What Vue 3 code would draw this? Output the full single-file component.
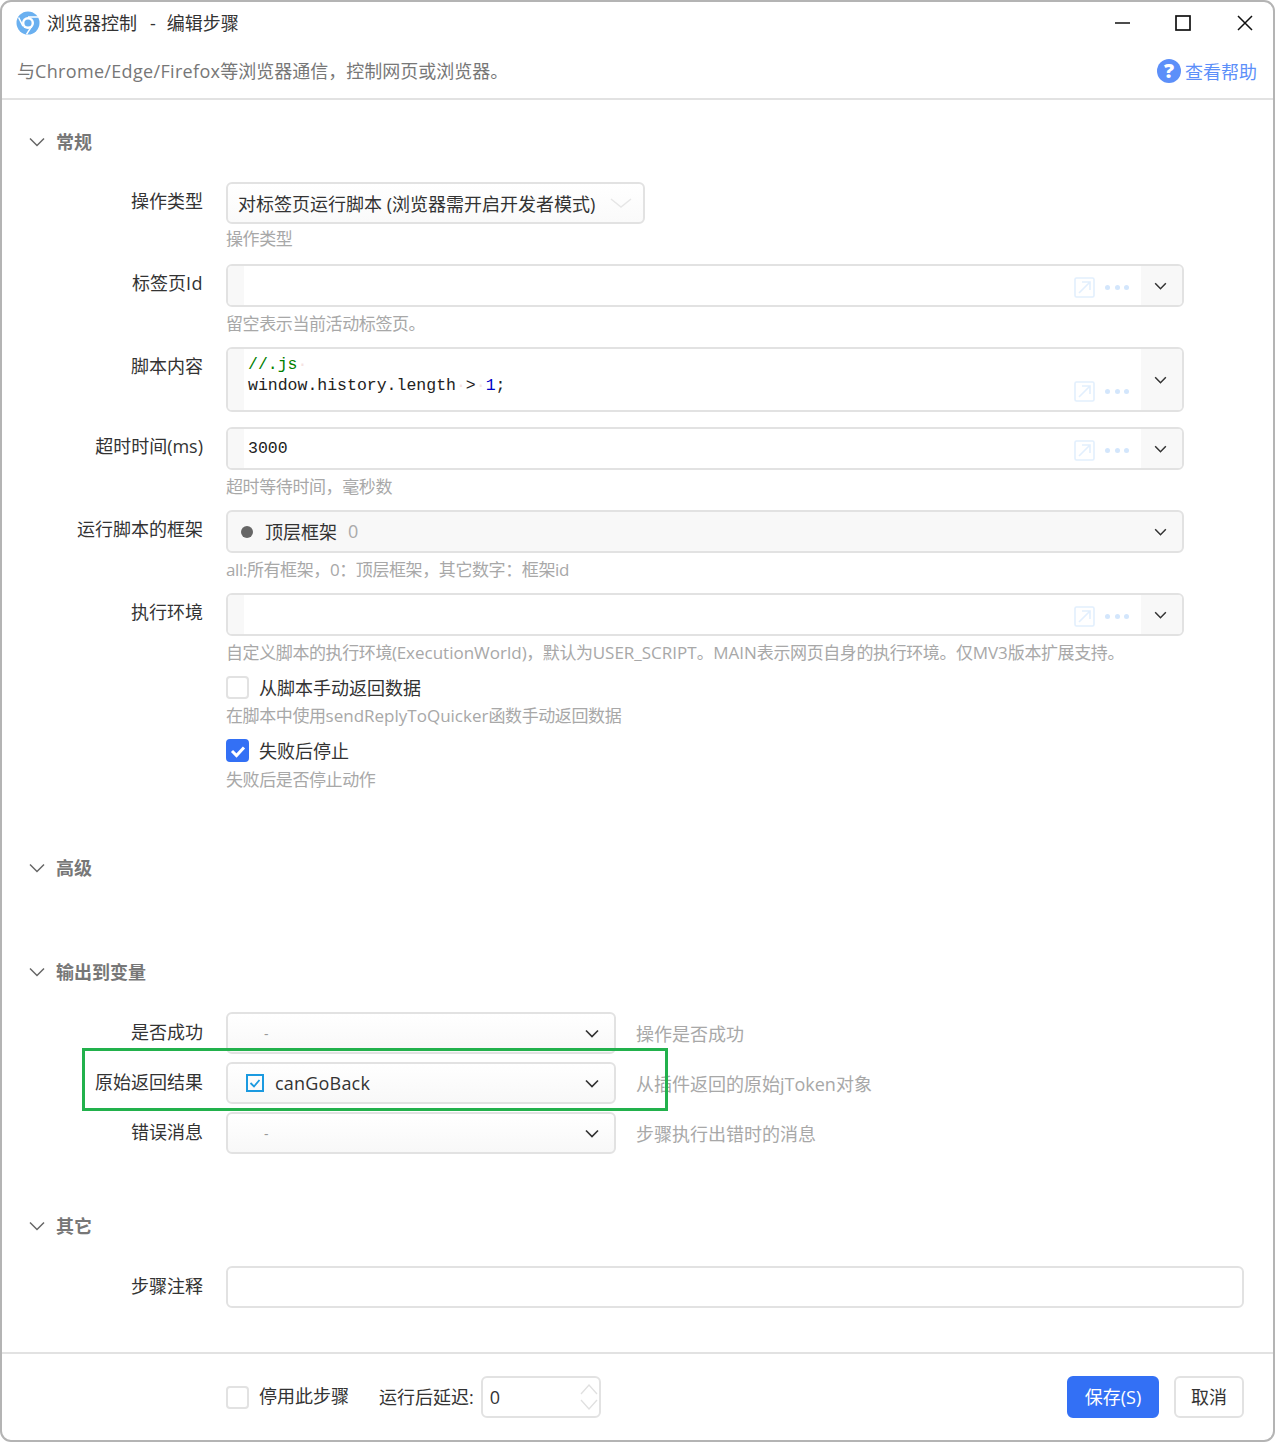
<script setup>
const chevron = 'M1 1.5 L7 7.5 L13 1.5'
const outputs = [
  { label: '是否成功', value: '', hint: '操作是否成功' },
  { label: '原始返回结果', value: 'canGoBack', hint: '从插件返回的原始jToken对象', marked: true },
  { label: '错误消息', value: '', hint: '步骤执行出错时的消息' }
]
</script>

<template>
  <div class="window">
    <header class="titlebar">
      <svg class="logo" viewBox="0 0 24 24" width="24" height="24">
        <circle cx="12" cy="12" r="11.5" fill="#6AB0F0" />
        <circle cx="12" cy="12" r="6" fill="#fff" />
        <circle cx="12" cy="12" r="3.6" fill="#6AB0F0" />
        <path d="M12 6 H22.4 M7 15.2 L2.6 6.5 M15.8 15 L10.5 23.4" stroke="#fff" stroke-width="1.5" fill="none" />
      </svg>
      <span class="title">浏览器控制</span>
      <span class="title-sep">-</span>
      <span class="title">编辑步骤</span>
      <div class="win-controls">
        <svg viewBox="0 0 16 16" width="16" height="16"><path d="M1 8 H16" stroke="#111" stroke-width="1.6" /></svg>
        <svg viewBox="0 0 16 16" width="16" height="16"><rect x="1" y="1" width="14" height="14" fill="none" stroke="#111" stroke-width="1.7" /></svg>
        <svg viewBox="0 0 16 16" width="16" height="16"><path d="M1 1 L15 15 M15 1 L1 15" stroke="#111" stroke-width="1.5" /></svg>
      </div>
    </header>

    <div class="descbar">
      <span class="desc">与<span class="lat-desc">Chrome/Edge/Firefox</span>等浏览器通信，控制网页或浏览器。</span>
      <a class="help"><span class="help-icon">?</span>查看帮助</a>
    </div>

    <main class="content">
      <section class="head first">
        <svg class="head-chev" viewBox="0 0 16 10" width="16" height="10"><path d="M1 1.5 L8 8.5 L15 1.5" /></svg>
        <span>常规</span>
      </section>

      <div class="row">
        <label class="label">操作类型</label>
        <div>
          <div class="field short select-plain">
            <span class="val">对标签页运行脚本 (浏览器需开启开发者模式)</span>
            <svg class="chev faint" viewBox="0 0 22 10" width="22" height="10"><path d="M1 1 L11 9 L21 1" /></svg>
          </div>
          <p class="hint hint-first">操作类型</p>
        </div>
      </div>

      <div class="row">
        <label class="label">标签页<span class="lat-id">Id</span></label>
        <div>
          <div class="field wide editor">
            <div class="gutter"></div>
            <div class="code"></div>
            <div class="tools">
              <svg viewBox="0 0 21 21" width="21" height="21" class="open"><rect x="1" y="1" width="19" height="19" rx="1.5" /><path d="M5 16 L16 5 M8 5 H16 V13" /></svg>
              <span class="dots"><i></i><i></i><i></i></span>
            </div>
            <div class="drop"><svg viewBox="0 0 14 9" width="13" height="8"><path :d="chevron" /></svg></div>
          </div>
          <p class="hint">留空表示当前活动标签页。</p>
        </div>
      </div>

      <div class="row row-tight">
        <label class="label">脚本内容</label>
        <div class="field wide editor tall">
          <div class="gutter"></div>
          <div class="code multi">
            <div><span class="cm">//.js</span><span class="ws">·</span></div>
            <div>window.history.length<span class="ws">·</span>&gt;<span class="ws">·</span><span class="num">1</span>;</div>
          </div>
          <div class="tools">
            <svg viewBox="0 0 21 21" width="21" height="21" class="open"><rect x="1" y="1" width="19" height="19" rx="1.5" /><path d="M5 16 L16 5 M8 5 H16 V13" /></svg>
            <span class="dots"><i></i><i></i><i></i></span>
          </div>
          <div class="drop"><svg viewBox="0 0 14 9" width="13" height="8"><path :d="chevron" /></svg></div>
        </div>
      </div>

      <div class="row">
        <label class="label">超时时间(ms)</label>
        <div>
          <div class="field wide editor">
            <div class="gutter"></div>
            <div class="code">3000</div>
            <div class="tools">
              <svg viewBox="0 0 21 21" width="21" height="21" class="open"><rect x="1" y="1" width="19" height="19" rx="1.5" /><path d="M5 16 L16 5 M8 5 H16 V13" /></svg>
              <span class="dots"><i></i><i></i><i></i></span>
            </div>
            <div class="drop"><svg viewBox="0 0 14 9" width="13" height="8"><path :d="chevron" /></svg></div>
          </div>
          <p class="hint">超时等待时间，毫秒数</p>
        </div>
      </div>

      <div class="row">
        <label class="label">运行脚本的框架</label>
        <div>
          <div class="field wide frame">
            <span class="dot"></span>
            <span class="val">顶层框架</span>
            <span class="val-sub">0</span>
            <svg class="frame-chev" viewBox="0 0 14 9" width="13" height="8"><path :d="chevron" /></svg>
          </div>
          <p class="hint">all:所有框架，0：顶层框架，其它数字：框架id</p>
        </div>
      </div>

      <div class="row">
        <label class="label">执行环境</label>
        <div>
          <div class="field wide editor">
            <div class="gutter"></div>
            <div class="code"></div>
            <div class="tools">
              <svg viewBox="0 0 21 21" width="21" height="21" class="open"><rect x="1" y="1" width="19" height="19" rx="1.5" /><path d="M5 16 L16 5 M8 5 H16 V13" /></svg>
              <span class="dots"><i></i><i></i><i></i></span>
            </div>
            <div class="drop"><svg viewBox="0 0 14 9" width="13" height="8"><path :d="chevron" /></svg></div>
          </div>
          <p class="hint nowrap">自定义脚本的执行环境(<span class="lat">ExecutionWorld</span>)，默认为<span class="lat">USER_SCRIPT</span>。<span class="lat">MAIN</span>表示网页自身的执行环境。仅<span class="lat">MV3</span>版本扩展支持。</p>
        </div>
      </div>

      <div class="row">
        <span></span>
        <div>
          <div class="check-line"><span class="box"></span><span class="check-text">从脚本手动返回数据</span></div>
          <p class="hint">在脚本中使用<span class="lat">sendReplyToQuicker</span>函数手动返回数据</p>
          <div class="check-line">
            <span class="box on"><svg viewBox="0 0 16 16" width="16" height="16"><path d="M2 8 L6.5 12.5 L14 4.5" /></svg></span>
            <span class="check-text">失败后停止</span>
          </div>
          <p class="hint hint-last">失败后是否停止动作</p>
        </div>
      </div>

      <section class="head adv">
        <svg class="head-chev" viewBox="0 0 16 10" width="16" height="10"><path d="M1 1.5 L8 8.5 L15 1.5" /></svg>
        <span>高级</span>
      </section>

      <section class="head out">
        <svg class="head-chev" viewBox="0 0 16 10" width="16" height="10"><path d="M1 1.5 L8 8.5 L15 1.5" /></svg>
        <span>输出到变量</span>
      </section>

      <div class="row out-row" v-for="o in outputs" :key="o.label">
        <label class="label low">{{ o.label }}</label>
        <div class="out-line">
          <div class="field out-select">
            <template v-if="o.value">
              <svg class="var-check" viewBox="0 0 18 18" width="18" height="18">
                <rect x="1" y="1" width="16" height="16" fill="none" stroke="#1B9AE0" stroke-width="2" />
                <path d="M4.5 9 L8 12.5 L13.5 6" fill="none" stroke="#1B9AE0" stroke-width="1.8" />
              </svg>
              <span class="val var-name">{{ o.value }}</span>
            </template>
            <span v-else class="dash">-</span>
            <svg class="out-chev" viewBox="0 0 14 9" width="14" height="9"><path :d="chevron" /></svg>
          </div>
          <span class="out-hint">{{ o.hint }}</span>
        </div>
        <div v-if="o.marked" class="marker"></div>
      </div>

      <section class="head other">
        <svg class="head-chev" viewBox="0 0 16 10" width="16" height="10"><path d="M1 1.5 L8 8.5 L15 1.5" /></svg>
        <span>其它</span>
      </section>

      <div class="row">
        <label class="label low">步骤注释</label>
        <div class="field full"></div>
      </div>
    </main>

    <footer class="footer">
      <span class="box"></span>
      <span class="disable-text">停用此步骤</span>
      <span class="delay-label">运行后延迟:</span>
      <div class="number">
        <span>0</span>
        <svg class="spin" viewBox="0 0 18 32" width="18" height="32">
          <path d="M1 13 L9 4 L17 13 M1 19 L9 28 L17 19" />
        </svg>
      </div>
      <div class="actions">
        <button class="btn primary">保存(S)</button>
        <button class="btn">取消</button>
      </div>
    </footer>
  </div>
</template>

<style scoped>
.window {
  box-sizing: border-box;
  width: 1275px;
  height: 1442px;
  display: flex;
  flex-direction: column;
  border: 2px solid #b4b4b4;
  border-radius: 11px;
  background: #fff;
  font-family: "Open Sans", "Noto Sans CJK SC", sans-serif;
  font-size: 18px;
  color: #333;
  overflow: hidden;
}
.titlebar {
  height: 42px;
  display: flex;
  align-items: center;
  padding-left: 14px;
  flex: none;
}
.logo { margin-right: 7px; }
.title { color: #333; line-height: 42px; }
.title-sep { margin: 0 11px 0 13px; color: #333; }
.win-controls {
  margin-left: auto;
  display: flex;
  padding-right: 20px;
}
.win-controls svg:nth-child(2) { margin-left: 45px; }
.win-controls svg:nth-child(3) { margin-left: 46px; }
.descbar {
  height: 54px;
  flex: none;
  display: flex;
  align-items: center;
  justify-content: space-between;
  padding: 0 16px 0 15px;
  border-bottom: 2px solid #e2e2e2;
}
.desc { color: #777; line-height: 54px; }
.lat-desc { letter-spacing: 0.33px; }
.help {
  display: flex;
  align-items: center;
  color: #5c8ff9;
}
.help-icon {
  width: 24px;
  height: 24px;
  margin-right: 4px;
  border-radius: 50%;
  background: #5c8ff9;
  color: #fff;
  font-weight: 800;
  font-size: 20px;
  line-height: 24px;
  text-align: center;
}
.content {
  flex: 1;
  padding: 30px 29px 0 0;
}
.head {
  height: 24px;
  display: flex;
  align-items: center;
  margin-bottom: 28px;
  font-weight: 700;
  color: #777;
  line-height: 24px;
}
.head-chev {
  margin: 0 11px 0 27px;
  fill: none;
  stroke: #666;
  stroke-width: 1.5;
}
.head.adv { margin-top: 54px; margin-bottom: 80px; }
.head.other { margin-top: 60px; }
.row {
  display: grid;
  grid-template-columns: 201px 1fr;
  column-gap: 23px;
}
.row-tight { margin-bottom: 15px; }
.label {
  text-align: right;
  line-height: 38px;
  white-space: nowrap;
  color: #333;
}
.label.low { line-height: 40px; }
.lat-id { letter-spacing: 0.5px; }
.field {
  box-sizing: border-box;
  height: 43px;
  border: 2px solid #e2e2e2;
  border-radius: 6px;
  background: #fff;
  display: flex;
  align-items: center;
  overflow: hidden;
}
.short { width: 419px; height: 42px; }
.wide { margin-right: 60px; }
.full { height: 42px; }
.tall { height: 65px; }
.select-plain {
  padding: 0 11px 1px 10px;
  justify-content: space-between;
  background: linear-gradient(#fff, #fafafa);
}
.val { color: #333; white-space: nowrap; }
.chev.faint { fill: none; stroke: #e6e6e6; stroke-width: 1.5; }
.hint {
  margin: 6px 0 12px;
  line-height: 22px;
  font-size: 17px;
  letter-spacing: -0.4px;
  color: #a8a8a8;
}
.hint-first { margin: 4px 0 14px; }
.hint-last { margin: 7px 0 11px; }
.lat { letter-spacing: 0; }
.nowrap { white-space: nowrap; }
.editor { align-items: stretch; }
.gutter { width: 16px; background: #f8f8f8; flex: none; }
.code {
  flex: 1;
  padding-left: 4px;
  font-family: "Liberation Mono", monospace;
  font-size: 16.5px;
  line-height: 39px;
  color: #222;
}
.code.multi { line-height: 21px; padding-top: 5px; }
.cm { color: #008000; }
.num { color: #0000c8; }
.ws { color: #f6e2e2; }
.tools {
  display: flex;
  align-items: flex-end;
  gap: 10px;
  padding: 0 12px 7px 0;
  flex: none;
}
.tall .tools { padding-bottom: 8px; }
.open { fill: none; stroke: #e2effd; stroke-width: 1.6; }
.dots {
  display: flex;
  gap: 4.5px;
  height: 21px;
  align-items: center;
}
.dots i {
  width: 5px;
  height: 5px;
  border-radius: 50%;
  background: #d3e6fc;
}
.drop {
  width: 41px;
  flex: none;
  background: #f8f8f8;
  display: flex;
  align-items: center;
  justify-content: center;
  padding-right: 2px;
  box-sizing: border-box;
}
.drop svg, .frame-chev, .out-chev {
  fill: none;
  stroke: #333;
  stroke-width: 1.7;
}
.frame {
  background: #f8f8f8;
  padding: 0 15px 0 13px;
}
.frame .val, .frame .val-sub { padding-bottom: 2px; }
.dot {
  width: 12px;
  height: 12px;
  border-radius: 50%;
  background: #666;
  margin-right: 12px;
}
.val-sub { margin-left: 11px; color: #aaa; }
.frame-chev { margin-left: auto; }
.check-line {
  display: flex;
  align-items: center;
  height: 23px;
  gap: 10px;
  color: #333;
}
.check-text { padding-bottom: 2px; }
.box {
  box-sizing: border-box;
  width: 23px;
  height: 23px;
  flex: none;
  border: 2px solid #e2e2e2;
  border-radius: 4px;
  background: #fff;
  display: inline-flex;
  align-items: center;
  justify-content: center;
}
.box.on { background: #3370f5; border-color: #3370f5; }
.box.on svg { fill: none; stroke: #fff; stroke-width: 3; }
.out-row { position: relative; margin-bottom: 8px; }
.out-line { display: flex; align-items: center; }
.out-select {
  width: 390px;
  height: 42px;
  flex: none;
  padding: 0 15px 0 18px;
  background: linear-gradient(#fff, #f8f8f8);
}
.dash { color: #999; margin-left: 18px; font-size: 14px; }
.var-check { margin-right: 11px; flex: none; }
.var-name { letter-spacing: 0.2px; }
.out-chev { margin-left: auto; }
.out-hint {
  margin-left: 20px;
  color: #a8a8a8;
  white-space: nowrap;
}
.marker {
  position: absolute;
  left: 80px;
  top: -14px;
  width: 586px;
  height: 63px;
  box-sizing: border-box;
  border: 3px solid #22b14c;
  pointer-events: none;
}
.footer {
  flex: none;
  box-sizing: border-box;
  height: 88px;
  border-top: 2px solid #e2e2e2;
  padding: 22px 29px 0 224px;
  display: flex;
  align-items: flex-start;
}
.footer .box { margin-top: 10px; }
.disable-text { margin-left: 10px; line-height: 40px; }
.delay-label { margin-left: 30px; margin-right: 7px; line-height: 42px; }
.number {
  box-sizing: border-box;
  width: 120px;
  height: 42px;
  border: 2px solid #e2e2e2;
  border-radius: 6px;
  padding-left: 7px;
  line-height: 38px;
  display: flex;
  justify-content: space-between;
  align-items: center;
}
.spin {
  margin-right: 1px;
  fill: none;
  stroke: #e0e0e0;
  stroke-width: 1.3;
}
.actions { margin-left: auto; display: flex; gap: 15px; }
.btn {
  box-sizing: border-box;
  height: 42px;
  width: 70px;
  border: 2px solid #e2e2e2;
  border-radius: 6px;
  background: #fff;
  color: #333;
  font: inherit;
  padding: 0 0 2px;
}
.btn.primary {
  width: 92px;
  background: #3370f5;
  border-color: #3370f5;
  color: #fff;
}
</style>

<style>
html, body { margin: 0; background: #fff; }
</style>
